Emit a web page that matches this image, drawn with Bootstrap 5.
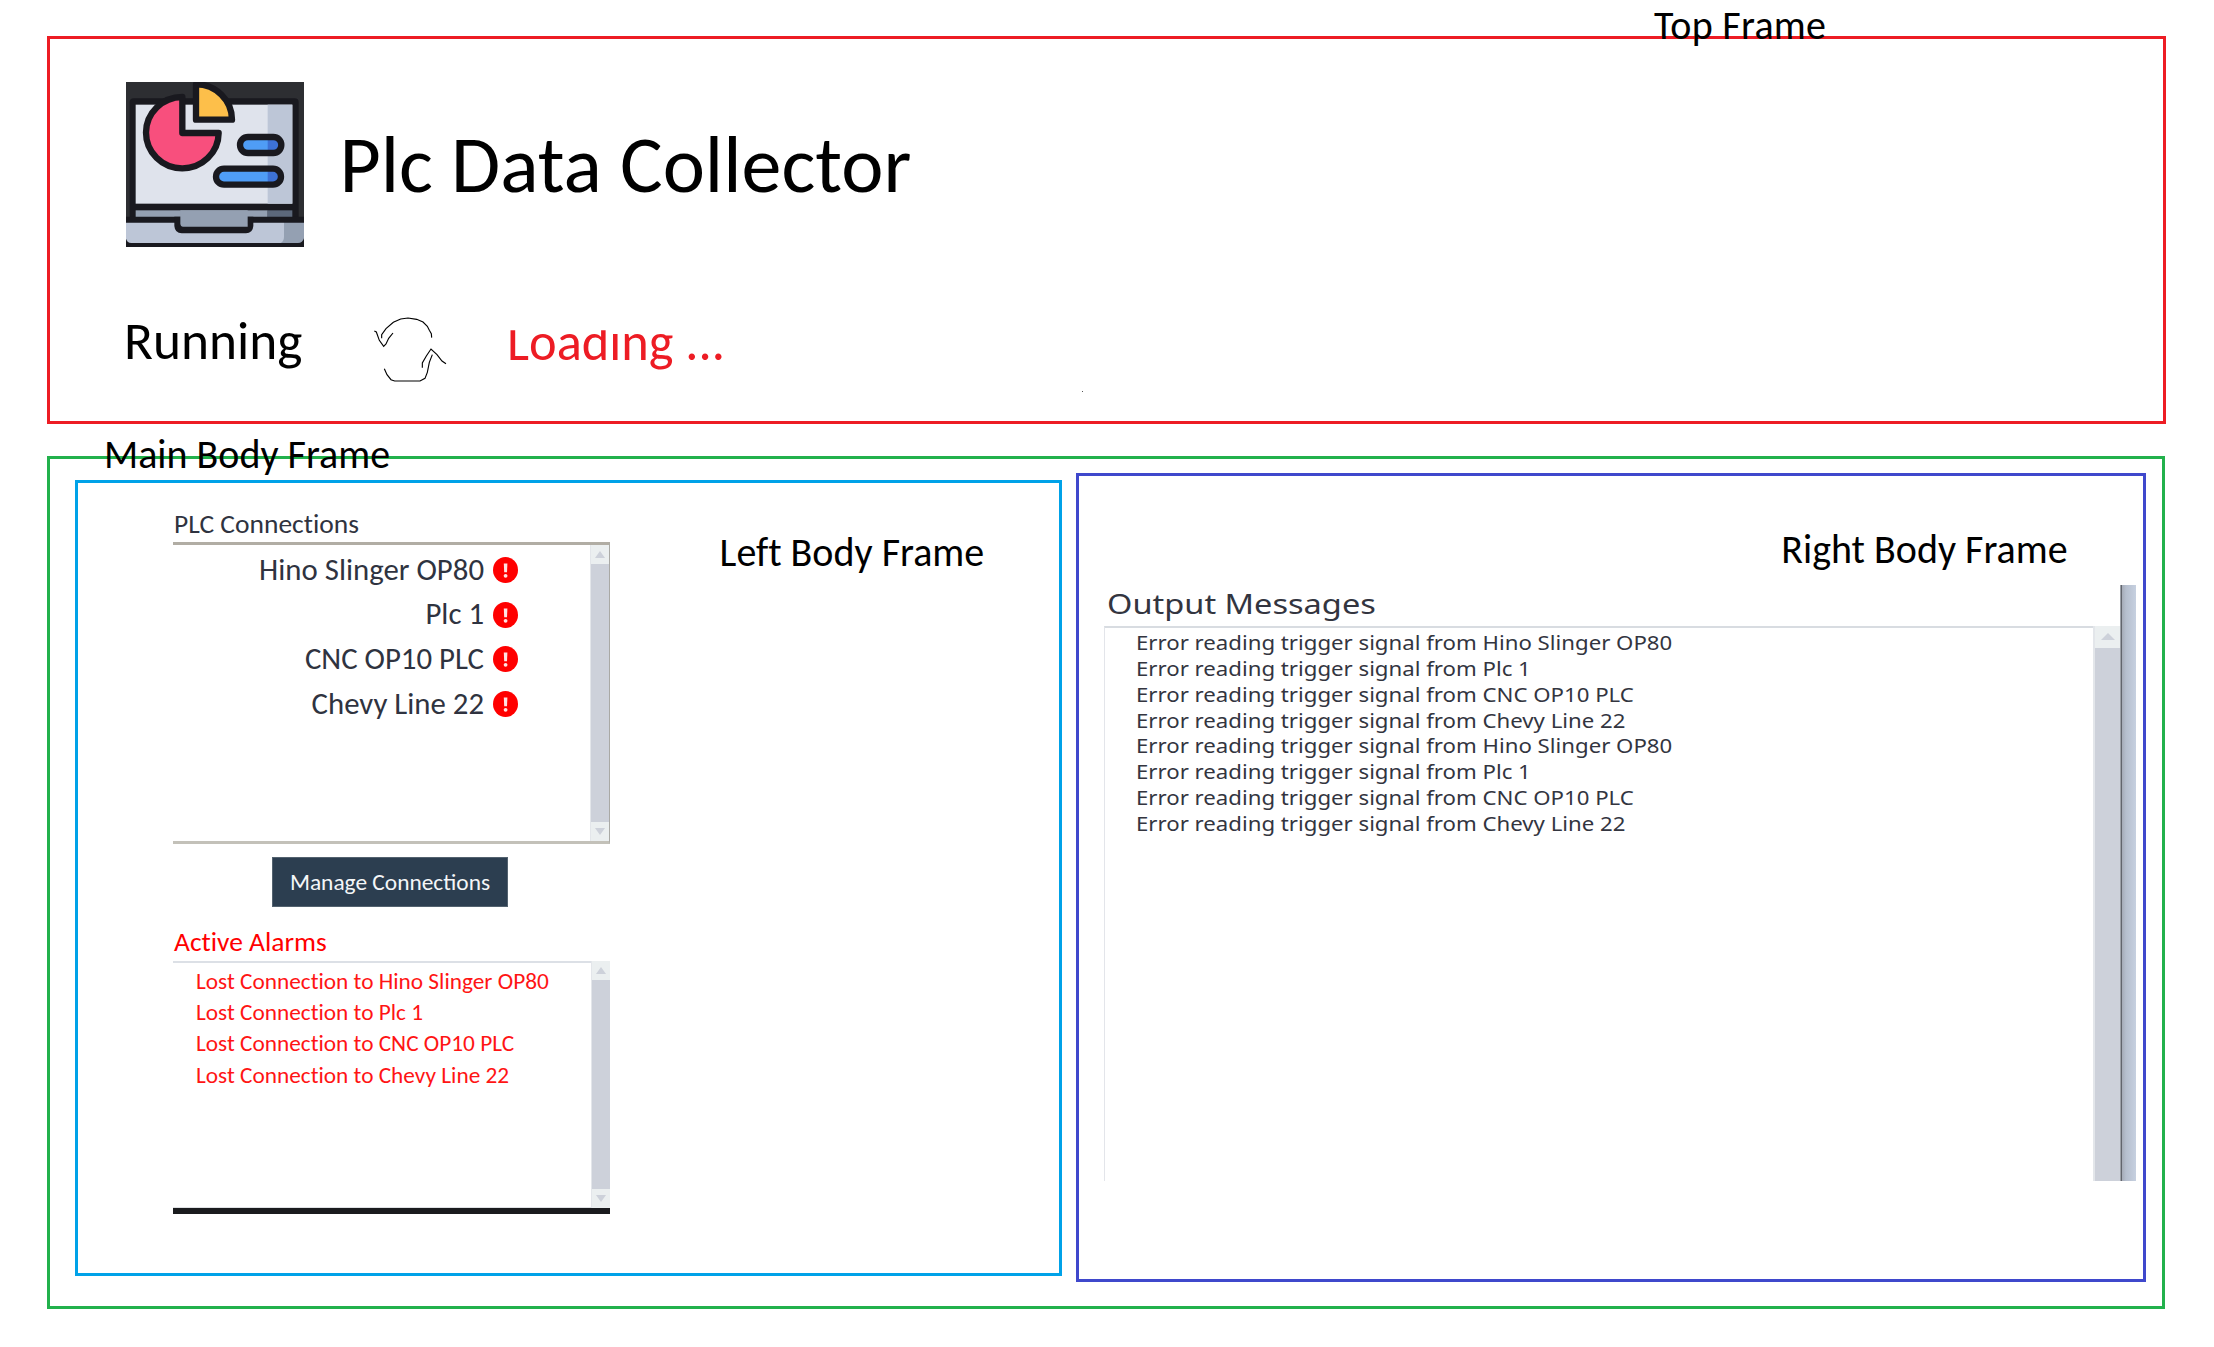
<!DOCTYPE html>
<html lang="en">
<head>
<meta charset="utf-8">
<title>Plc Data Collector</title>
<link href="https://cdn.jsdelivr.net/npm/bootstrap@5.3.0/dist/css/bootstrap.min.css" rel="stylesheet">
<style>
  body { font-family: Calibri, Carlito, Lato, sans-serif; font-variant-ligatures: none; color: #000; background: #fff; width: 2214px; height: 1347px; overflow: hidden; padding: 36px 48px 0 47px; }
  .frame { border: 3px solid; }
  .frame-top { border-color: #ed1c24; height: 388px; padding: 43px 0 0 76px; }
  .frame-main { border-color: #22b14c; width: 2118px; height: 853px; margin-top: 32px; padding: 14px 0 0 25px; gap: 14px; }
  .frame-left { border-color: #00a2e8; width: 987px; height: 796px; margin-top: 7px; padding: 26.6px 0 0 95px; }
  .frame-right { border-color: #3f48cc; width: 1070px; height: 809px; padding: 54.4px 0 0 25px; }
  .frame-name { font-size: 40px; line-height: 40px; white-space: nowrap; }
  .name-top { left: 1604px; top: -33.2px; letter-spacing: .3px; }
  .name-main { left: 54px; top: -23.6px; }
  .name-left { margin: 23.1px 0 0 109.6px; }
  .name-right { margin-right: 75.4px; }
  .app-logo { width: 178px; height: 165px; }
  .app-title { font-size: 80px; line-height: 80px; margin: 43.2px 0 0 35.4px; font-weight: 400; }
  .status-row { font-size: 53.33px; line-height: 53px; margin: 57.2px 0 0 -2px; }
  .status-row > svg { margin-top: 0; }
  .status-text { width: 240px; margin-top: 9.5px; }
  .status-loading { color: #ed1c24; font-size: 52.4px; margin: 12px 0 0 47px; clip-path: inset(14px -5px -10px -5px); }
  .speck { left: 1032px; top: 352px; width: 1px; height: 1px; background: #555; }
  .side-col { width: 437px; color: #2f3340; }
  .side-title { font-size: 27.5px; line-height: 28px; height: 32.4px; margin: 0; padding-left: 1px; font-weight: 400; }
  .conn-box { height: 302px; border-top: 3px solid #b1ada4; border-bottom: 3px solid #c3c1b9; border-right: 1px solid #a9a9a5; }
  .conn-list { padding: 2.9px 72px 0 0; }
  .conn-item { font-size: 30.8px; line-height: 44.6px; height: 44.6px; gap: 9px; }
  .scroll-track { width: 19px; background: #cdd1da; border-left: 1px solid #e3e6ea; }
  .scroll-end { height: 19px; background: #ebeff0; }
  .btn-manage { --bs-btn-color: #f4f6f8; --bs-btn-bg: #2c3e50; --bs-btn-border-color: #53626f; --bs-btn-border-radius: 0; --bs-btn-padding-x: 0; --bs-btn-padding-y: 0; width: 236px; height: 50px; font-size: 23.4px; line-height: 49px; margin: 13px 0 21.3px 99px; }
  .alarm-title { color: #f00; height: 33px; }
  .alarm-box { height: 253px; border-bottom: 6px solid #1a1b1e; color: #ff1414; }
  .alarm-list { border-top: 2px solid #dce0e6; border-bottom: 1px solid #dfe1e4; padding: 2.4px 0 0 23px; font-size: 23.3px; line-height: 31.4px; }
  .output-panel { width: 1032px; height: 596px; margin-top: 14.6px; font-family: "Segoe UI", "Noto Sans", sans-serif; color: #33353f; }
  .output-title { font-size: 28px; line-height: 28px; height: 41px; margin: 0; padding: 4.4px 0 0 3px; font-weight: 400; }
  .widened { display: inline-block; transform-origin: 0 50%; transform: scaleX(1.162); }
  .output-list { border-top: 2px solid #d8dce1; border-left: 1px solid #e3e5ea; padding: 2px 0 0 30.5px; font-size: 20.6px; line-height: 25.87px; }
  .output-list > div { transform-origin: 0 50%; transform: scaleX(1.078); white-space: nowrap; }
  .output-track { width: 27px; border-left-width: 2px; }
  .output-track .scroll-end { height: 22px; }
  .window-edge { width: 16px; background: linear-gradient(90deg, #9da1a8 0 1px, #62656d 1px 2px, #a5abb7 2px, #b6bfce 6px, #c6d0e0); }
</style>
</head>
<body>
<header class="frame frame-top position-relative">
  <span class="frame-name name-top position-absolute">Top Frame</span>
  <div class="d-flex align-items-start">
    <svg class="app-logo flex-shrink-0" viewBox="288 186 534 495" preserveAspectRatio="none">
      <rect x="288" y="186" width="534" height="495" fill="#2d2e32"/>
      <rect x="299" y="235" width="507" height="370" rx="12" fill="#19191f"/>
      <rect x="317" y="254" width="470" height="297" fill="#dfe3ec"/>
      <rect x="713" y="254" width="74" height="297" fill="#bdc6d7"/>
      <rect x="317" y="571" width="396" height="30" fill="#94a0b2"/>
      <rect x="713" y="571" width="74" height="30" fill="#5c687b"/>
      <path d="M288 590H822V681H288Z" fill="#19191f"/>
      <path d="M288 608H762V669H304Q290 669 288 655Z" fill="#bdc6d7"/>
      <path d="M762 608H822V655Q818 669 804 669H752Q762 663 762 650Z" fill="#94a0b2"/>
      <path d="M433 590H670V618Q668 640 648 640H455Q435 640 433 618Z" fill="#19191f"/>
      <path d="M451 571H653V620H458Q452 620 451 612Z" fill="#94a0b2"/>
      <path d="M457 231V339H566A109 107 0 1 1 457 231Z" fill="#f84f7d" stroke="#19191f" stroke-width="19" stroke-linejoin="round"/>
      <path d="M498 193V299H606A108 106 0 0 0 498 193Z" fill="#fdbf4a" stroke="#19191f" stroke-width="19" stroke-linejoin="round"/>
      <rect x="630" y="351" width="124" height="48" rx="24" fill="#4f9df6"/>
      <path d="M713 351H732A22 24 0 0 1 732 399H713Z" fill="#3d72d6"/>
      <rect x="630" y="351" width="124" height="48" rx="24" fill="none" stroke="#19191f" stroke-width="19"/>
      <rect x="558" y="446" width="195" height="48" rx="24" fill="#4f9df6"/>
      <path d="M713 446H732A22 24 0 0 1 732 494H713Z" fill="#3d72d6"/>
      <rect x="558" y="446" width="195" height="48" rx="24" fill="none" stroke="#19191f" stroke-width="19"/>
    </svg>
    <h1 class="app-title">Plc Data Collector</h1>
  </div>
  <div class="status-row d-flex align-items-start">
    <span class="status-text">Running</span>
    <svg width="96" height="90" viewBox="0 -5 288 270" fill="none" stroke="#000" stroke-width="3.4">
      <path d="M203 96L202 84L196 74L190 62L177 49L158 41L132 37L110 40L88 50L66 69L53 87V98"/>
      <path d="M31 76L37 79L46 104L59 122L66 115L74 98L87 82"/>
      <path d="M61 189L69 207L81 222L92 226H168L183 218L190 200L196 170L205 147"/>
      <path d="M175 186V172L187 151L201 130L219 147L234 166L246 174"/>
    </svg>
    <span class="status-loading">Loading ...</span>
  </div>
  <span class="speck position-absolute"></span>
</header>

<main class="frame frame-main d-flex align-items-start position-relative">
  <span class="frame-name name-main position-absolute">Main Body Frame</span>
  <section class="frame frame-left d-flex align-items-start flex-shrink-0">
    <div class="side-col flex-shrink-0">
      <h2 class="side-title">PLC Connections</h2>
      <div class="conn-box d-flex">
        <div class="conn-list flex-grow-1">
          <div class="conn-item d-flex justify-content-end align-items-center"><span>Hino Slinger OP80</span><svg width="25" height="26" viewBox="0 0 25 26"><ellipse cx="12.5" cy="13" rx="12.5" ry="13" fill="#f00"/><path d="M10.8 6.6h3.6l-.4 8.6h-2.8z" fill="#ffe3e3"/><circle cx="12.6" cy="18.8" r="1.9" fill="#ffe3e3"/></svg></div>
          <div class="conn-item d-flex justify-content-end align-items-center"><span>Plc 1</span><svg width="25" height="26" viewBox="0 0 25 26"><ellipse cx="12.5" cy="13" rx="12.5" ry="13" fill="#f00"/><path d="M10.8 6.6h3.6l-.4 8.6h-2.8z" fill="#ffe3e3"/><circle cx="12.6" cy="18.8" r="1.9" fill="#ffe3e3"/></svg></div>
          <div class="conn-item d-flex justify-content-end align-items-center"><span>CNC OP10 PLC</span><svg width="25" height="26" viewBox="0 0 25 26"><ellipse cx="12.5" cy="13" rx="12.5" ry="13" fill="#f00"/><path d="M10.8 6.6h3.6l-.4 8.6h-2.8z" fill="#ffe3e3"/><circle cx="12.6" cy="18.8" r="1.9" fill="#ffe3e3"/></svg></div>
          <div class="conn-item d-flex justify-content-end align-items-center"><span>Chevy Line 22</span><svg width="25" height="26" viewBox="0 0 25 26"><ellipse cx="12.5" cy="13" rx="12.5" ry="13" fill="#f00"/><path d="M10.8 6.6h3.6l-.4 8.6h-2.8z" fill="#ffe3e3"/><circle cx="12.6" cy="18.8" r="1.9" fill="#ffe3e3"/></svg></div>
        </div>
        <div class="scroll-track d-flex flex-column justify-content-between">
          <div class="scroll-end d-flex align-items-center justify-content-center"><svg width="10" height="7"><path d="M0 7L5 0L10 7Z" fill="#cdd1da"/></svg></div>
          <div class="scroll-end d-flex align-items-center justify-content-center"><svg width="10" height="7"><path d="M0 0L5 7L10 0Z" fill="#cdd1da"/></svg></div>
        </div>
      </div>
      <button class="btn btn-manage d-block" type="button">Manage Connections</button>
      <h2 class="side-title alarm-title">Active Alarms</h2>
      <div class="alarm-box d-flex">
        <div class="alarm-list flex-grow-1">
          <div>Lost Connection to Hino Slinger OP80</div>
          <div>Lost Connection to Plc 1</div>
          <div>Lost Connection to CNC OP10 PLC</div>
          <div>Lost Connection to Chevy Line 22</div>
        </div>
        <div class="scroll-track d-flex flex-column justify-content-between">
          <div class="scroll-end d-flex align-items-center justify-content-center"><svg width="10" height="7"><path d="M0 7L5 0L10 7Z" fill="#cdd1da"/></svg></div>
          <div class="scroll-end d-flex align-items-center justify-content-center"><svg width="10" height="7"><path d="M0 0L5 7L10 0Z" fill="#cdd1da"/></svg></div>
        </div>
      </div>
    </div>
    <span class="frame-name name-left">Left Body Frame</span>
  </section>

  <section class="frame frame-right flex-shrink-0">
    <div class="frame-name name-right text-end">Right Body Frame</div>
    <div class="output-panel d-flex">
      <div class="d-flex flex-column flex-grow-1">
        <h2 class="output-title"><span class="widened">Output Messages</span></h2>
        <div class="d-flex flex-grow-1">
          <div class="output-list flex-grow-1">
            <div>Error reading trigger signal from Hino Slinger OP80</div>
            <div>Error reading trigger signal from Plc 1</div>
            <div>Error reading trigger signal from CNC OP10 PLC</div>
            <div>Error reading trigger signal from Chevy Line 22</div>
            <div>Error reading trigger signal from Hino Slinger OP80</div>
            <div>Error reading trigger signal from Plc 1</div>
            <div>Error reading trigger signal from CNC OP10 PLC</div>
            <div>Error reading trigger signal from Chevy Line 22</div>
          </div>
          <div class="scroll-track output-track">
            <div class="scroll-end d-flex align-items-center justify-content-center"><svg width="14" height="7"><path d="M0 7L7 0L14 7Z" fill="#cdd1da"/></svg></div>
          </div>
        </div>
      </div>
      <div class="window-edge"></div>
    </div>
  </section>
</main>
<script src="https://cdn.jsdelivr.net/npm/bootstrap@5.3.0/dist/js/bootstrap.bundle.min.js"></script>
</body>
</html>
